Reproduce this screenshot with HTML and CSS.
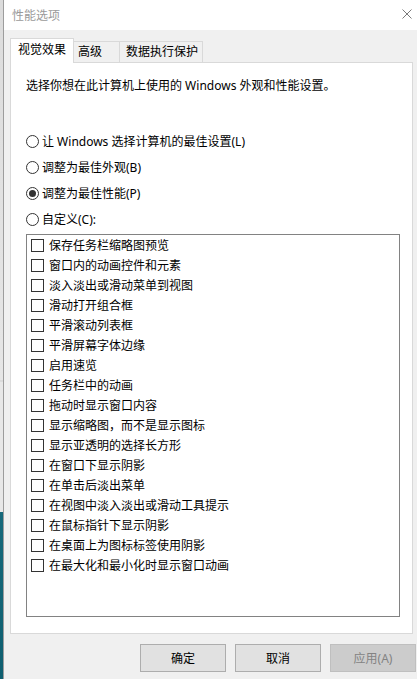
FILE: index.html
```html
<!DOCTYPE html>
<html lang="zh-CN">
<head>
<meta charset="utf-8">
<title>性能选项</title>
<link rel="stylesheet" href="styles.css">
</head>
<body>
<div class="desktop"></div>
<div class="window">
  <div class="titlebar">
    <span class="title">性能选项</span>
    <svg class="close" width="10" height="10" viewBox="0 0 10 10"><path d="M0.5 0.5 L9.5 9.5 M9.5 0.5 L0.5 9.5" stroke="#7a7a7a" stroke-width="1" fill="none"/></svg>
  </div>
  <div class="tabs">
    <div class="tab tab-1 active">视觉效果</div>
    <div class="tab tab-2">高级</div>
    <div class="tab tab-3">数据执行保护</div>
  </div>
  <div class="panel">
    <p class="desc">选择你想在此计算机上使用的 Windows 外观和性能设置。</p>
    <div class="radios">
      <div class="radio"><span class="circle"></span>让 Windows 选择计算机的最佳设置(L)</div>
      <div class="radio"><span class="circle"></span>调整为最佳外观(B)</div>
      <div class="radio"><span class="circle checked"></span>调整为最佳性能(P)</div>
      <div class="radio"><span class="circle"></span>自定义(C):</div>
    </div>
    <div class="list">
      <div class="row"><span class="box"></span>保存任务栏缩略图预览</div>
      <div class="row"><span class="box"></span>窗口内的动画控件和元素</div>
      <div class="row"><span class="box"></span>淡入淡出或滑动菜单到视图</div>
      <div class="row"><span class="box"></span>滑动打开组合框</div>
      <div class="row"><span class="box"></span>平滑滚动列表框</div>
      <div class="row"><span class="box"></span>平滑屏幕字体边缘</div>
      <div class="row"><span class="box"></span>启用速览</div>
      <div class="row"><span class="box"></span>任务栏中的动画</div>
      <div class="row"><span class="box"></span>拖动时显示窗口内容</div>
      <div class="row"><span class="box"></span>显示缩略图，而不是显示图标</div>
      <div class="row"><span class="box"></span>显示亚透明的选择长方形</div>
      <div class="row"><span class="box"></span>在窗口下显示阴影</div>
      <div class="row"><span class="box"></span>在单击后淡出菜单</div>
      <div class="row"><span class="box"></span>在视图中淡入淡出或滑动工具提示</div>
      <div class="row"><span class="box"></span>在鼠标指针下显示阴影</div>
      <div class="row"><span class="box"></span>在桌面上为图标标签使用阴影</div>
      <div class="row"><span class="box"></span>在最大化和最小化时显示窗口动画</div>
    </div>
  </div>
  <div class="buttons">
    <div class="btn">确定</div>
    <div class="btn">取消</div>
    <div class="btn disabled">应用(A)</div>
  </div>
</div>
</body>
</html>
```
FILE: styles.css
```css
* { box-sizing: border-box; }
html, body {
  margin: 0;
  padding: 0;
  width: 417px;
  height: 679px;
  overflow: hidden;
}
body {
  display: flex;
  font-family: "Noto Sans", "Noto Sans CJK SC", sans-serif;
  font-size: 12px;
  color: #000;
  background: #f0f0f0;
}
.desktop {
  flex: none;
  width: 3px;
  height: 679px;
  background: linear-gradient(to bottom, #dcdcdc 0, #e6e6e6 380px, #cfcfcf 381px, #e8e8e8 382px, #e8e8e8 512px, #17697b 512px, #0f5f70 679px);
}
.window {
  flex: none;
  width: 414px;
  height: 679px;
  border-left: 1px solid #9d9d9d;
  background: #f0f0f0;
}
.titlebar {
  height: 30px;
  background: #fff;
  display: flex;
  align-items: center;
  justify-content: space-between;
  padding: 0 5px 0 8px;
}
.title {
  color: #9a9a9a;
  line-height: 20px;
  padding-top: 1px;
}
.close { display: block; margin-top: -3px; }
.tabs {
  display: flex;
  align-items: flex-end;
  height: 32px;
  padding: 8px 0 0 6px;
}
.tab {
  height: 21px;
  border: 1px solid #d9d9d9;
  border-bottom: none;
  border-left: none;
  background: #f0f0f0;
  line-height: 19px;
  white-space: nowrap;
}
.tab.active {
  position: relative;
  z-index: 1;
  height: 25px;
  margin-bottom: -1px;
  border-left: 1px solid #d9d9d9;
  background: #fff;
  line-height: 20px;
  padding-top: 1px;
}
.tab-1 { width: 64px; padding-left: 7px; }
.tab-2 { width: 46px; padding-left: 4px; }
.tab-3 { width: 83px; padding-left: 6px; }
.panel {
  margin-left: 6px;
  width: 403px;
  height: 572px;
  border: 1px solid #d9d9d9;
  background: #fff;
  padding: 13px 0 0 15px;
  display: flex;
  flex-direction: column;
}
.desc {
  margin: 0;
  line-height: 20px;
}
.radios {
  margin-top: 32px;
  display: flex;
  flex-direction: column;
}
.radio {
  height: 26px;
  display: flex;
  align-items: center;
  gap: 3px;
}
.circle {
  flex: none;
  width: 13px;
  height: 13px;
  border: 1px solid #333;
  border-radius: 50%;
  display: flex;
  align-items: center;
  justify-content: center;
}
.circle.checked::after {
  content: "";
  width: 7px;
  height: 7px;
  border-radius: 50%;
  background: #333;
}
.list {
  margin-top: 2px;
  width: 374px;
  height: 383px;
  border: 1px solid #828282;
  padding: 0 0 0 4px;
  display: flex;
  flex-direction: column;
}
.row {
  height: 20px;
  display: flex;
  align-items: center;
  gap: 5px;
}
.box {
  flex: none;
  width: 13px;
  height: 13px;
  border: 1px solid #333;
  background: #fff;
}
.buttons {
  display: flex;
  justify-content: flex-end;
  gap: 9px;
  margin-top: 10px;
  padding-right: 1px;
}
.btn {
  width: 86px;
  height: 28px;
  border: 1px solid #adadad;
  background: #e1e1e1;
  display: flex;
  align-items: center;
  justify-content: center;
}
.btn.disabled {
  background: #cccccc;
  border-color: #bfbfbf;
  color: #838383;
}
```
